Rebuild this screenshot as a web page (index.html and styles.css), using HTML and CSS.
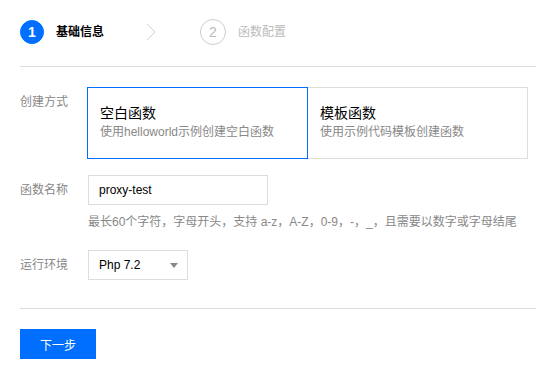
FILE: index.html
```html
<!DOCTYPE html>
<html lang="zh-CN">
<head>
    <meta charset="UTF-8">
    <title>新建函数</title>
    <link rel="stylesheet" href="styles.css">
</head>
<body>
    <div class="steps">
        <div class="step active">
            <span class="step-num">1</span>
            <span class="step-title">基础信息</span>
        </div>
        <svg class="step-arrow" width="10" height="18" viewBox="0 0 10 18">
            <polyline points="1,1 9,9 1,17" fill="none" stroke="#d4d4d4" stroke-width="1"/>
        </svg>
        <div class="step">
            <span class="step-num">2</span>
            <span class="step-title">函数配置</span>
        </div>
    </div>

    <div class="form">
        <!-- 创建方式 -->
        <div class="form-item item-type">
            <label class="form-label">创建方式</label>
            <div class="cards">
                <div class="card selected">
                    <div class="card-title">空白函数</div>
                    <div class="card-desc">使用helloworld示例创建空白函数</div>
                </div>
                <div class="card">
                    <div class="card-title">模板函数</div>
                    <div class="card-desc">使用示例代码模板创建函数</div>
                </div>
            </div>
        </div>

        <!-- 函数名称 -->
        <div class="form-item item-name">
            <label class="form-label">函数名称</label>
            <div class="form-control">
                <input class="input" type="text" value="proxy-test">
                <p class="hint">最长60个字符，字母开头，支持 a-z，A-Z，0-9，-，_，且需要以数字或字母结尾</p>
            </div>
        </div>

        <!-- 运行环境 -->
        <div class="form-item item-runtime">
            <label class="form-label">运行环境</label>
            <div class="select">
                <span>Php 7.2</span>
                <span class="select-arrow"></span>
            </div>
        </div>
    </div>

    <div class="footer">
        <button class="btn-primary">下一步</button>
    </div>
</body>
</html>
```

FILE: styles.css
```css
body {
    font-family: "Liberation Sans", "Noto Sans CJK SC", sans-serif;
    font-size: 12px;
    color: #000;
    background-color: #fff;
    margin: 0;
    padding: 20px 0 0 20px;
}

/* Шаги */
.steps {
    display: flex;
    align-items: center;
    height: 24px;
    padding-bottom: 22px;
    border-bottom: 1px solid #ddd;
}

.step {
    display: flex;
    align-items: center;
}

.step-num {
    width: 24px;
    height: 24px;
    box-sizing: border-box;
    border-radius: 50%;
    border: 1px solid #ccc;
    color: #bbb;
    font-size: 14px;
    display: flex;
    justify-content: center;
    align-items: center;
}

.step-title {
    margin-left: 12px;
    color: #bbb;
    line-height: 24px;
}

.step.active .step-num {
    background-color: #006eff;
    border-color: #006eff;
    color: #fff;
    font-weight: bold;
}

.step.active .step-title {
    color: #000;
    font-weight: bold;
}

.step-arrow {
    margin: 0 44px 0 42px;
}

.step:last-child .step-num {
    width: 26px;
    height: 26px;
}

/* Форма */
.form {
    padding: 20px 0 28px;
    border-bottom: 1px solid #ddd;
}

.form-item {
    display: flex;
    align-items: flex-start;
}

.form-label {
    width: 67px;
    flex-shrink: 0;
    color: #888;
    line-height: 30px;
}

.item-name {
    margin-top: 16px;
}

.item-runtime {
    margin-top: 21px;
}

.cards {
    display: flex;
}

.card {
    width: 221px;
    height: 72px;
    box-sizing: border-box;
    border: 1px solid #ddd;
    padding: 15px 12px;
    cursor: pointer;
}

.card + .card {
    margin-left: -1px;
}

.card.selected {
    border-color: #006eff;
    position: relative;
    z-index: 1;
}

.card-title {
    font-size: 14px;
    line-height: 20px;
}

.card-desc {
    color: #888;
    line-height: 18px;
}

.form-control {
    padding-left: 1px;
}

.input {
    display: block;
    width: 180px;
    height: 30px;
    box-sizing: border-box;
    border: 1px solid #ddd;
    padding: 0 10px;
    font-family: inherit;
    font-size: 12px;
    color: #000;
    outline: none;
}

.hint {
    margin: 10px 0 0;
    color: #888;
    line-height: 14px;
}

.select {
    margin-left: 1px;
    width: 100px;
    height: 30px;
    box-sizing: border-box;
    border: 1px solid #ddd;
    padding: 0 8px 0 10px;
    display: flex;
    align-items: center;
    justify-content: space-between;
}

.select-arrow {
    width: 0;
    height: 0;
    border-left: 4px solid transparent;
    border-right: 4px solid transparent;
    border-top: 5px solid #888;
    margin-right: 1px;
}

/* Кнопка */
.footer {
    padding-top: 20px;
}

.btn-primary {
    width: 76px;
    height: 30px;
    border: none;
    background-color: #006eff;
    color: #fff;
    font-family: inherit;
    font-size: 12px;
    padding: 0;
    cursor: pointer;
}
```
